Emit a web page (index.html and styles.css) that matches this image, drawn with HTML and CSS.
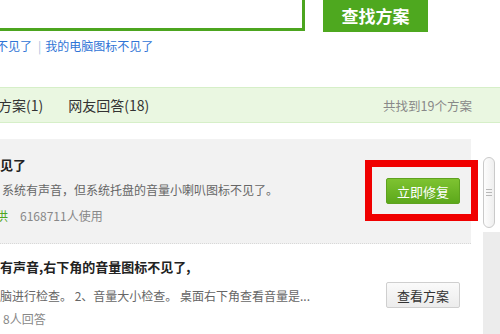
FILE: index.html
```html
<!DOCTYPE html>
<html lang="zh-CN">
<head>
<meta charset="utf-8">
<title>音量图标不见了</title>
<link rel="stylesheet" href="styles.css">
</head>
<body>
<div class="page">
  <div class="search">
    <div class="search-input"></div>
    <button class="search-btn">查找方案</button>
  </div>
  <div class="related"><a class="cut-link">不见了</a><span class="sep">|</span><a>我的电脑图标不见了</a></div>

  <div class="tabs">
    <div class="tab-list">
      <span class="tab tab-first">方案(1)</span>
      <span class="tab">网友回答(18)</span>
    </div>
    <span class="total">共找到19个方案</span>
  </div>

  <div class="results">
    <div class="item item-solution">
      <div class="info">
        <div class="title">见了</div>
        <div class="desc">系统有声音，但系统托盘的音量小喇叭图标不见了。</div>
        <div class="meta"><span class="src">供</span><span class="count">6168711人使用</span></div>
      </div>
      <button class="btn-fix">立即修复</button>
    </div>
    <div class="item item-answer">
      <div class="info">
        <div class="title">有声音,右下角的音量图标不见了,</div>
        <div class="desc">脑进行检查。 2、音量大小检查。 桌面右下角查看音量是...</div>
        <div class="meta"><span class="count">8人回答</span></div>
      </div>
      <button class="btn-view">查看方案</button>
    </div>
  </div>

  <div class="highlight"></div>
  <div class="scrollbar">
    <div class="thumb"><span class="grip"></span></div>
    <div class="track"></div>
  </div>
</div>
</body>
</html>
```

FILE: styles.css
```css
html, body {
  margin: 0;
  padding: 0;
  background: #fff;
}
body {
  width: 500px;
  height: 334px;
  overflow: hidden;
  font-family: "Noto Sans CJK SC", "Liberation Sans", sans-serif;
  color: #333;
}
.page {
  position: relative;
  width: 500px;
  height: 334px;
  overflow: hidden;
}
.search {
  display: flex;
  align-items: flex-start;
  margin-top: -5px;
}
.search-input {
  box-sizing: border-box;
  width: 400px;
  height: 36px;
  margin-left: -95px;
  border: 3px solid #4ca51f;
  background: #fff;
}
.search-btn {
  box-sizing: border-box;
  width: 105px;
  height: 37px;
  margin-left: 18px;
  border: 0;
  padding: 4px 0 0;
  background: #4ea81f;
  color: #fff;
  font-family: inherit;
  font-size: 17px;
  font-weight: bold;
}
.related {
  margin-top: 5px;
  height: 18px;
  line-height: 18px;
  font-size: 12px;
  color: #2f74d6;
  white-space: nowrap;
}
.related a {
  color: #2f74d6;
}
.cut-link {
  display: inline-block;
  margin-left: -4px;
}
.sep {
  color: #a9bfe0;
  margin: 0 4px 0 6px;
}
.tabs {
  box-sizing: border-box;
  margin-top: 32px;
  height: 36px;
  display: flex;
  align-items: center;
  justify-content: space-between;
  padding-right: 28px;
  background: #eaf7e1;
  border-top: 1px solid #d6efc8;
  border-bottom: 1px solid #d6efc8;
  white-space: nowrap;
}
.tab-list {
  display: flex;
  gap: 25px;
}
.tab {
  font-size: 14px;
  color: #333;
}
.tab-first {
  margin-left: -2px;
}
.total {
  font-size: 12.5px;
  color: #888;
}
.results {
  margin-top: 16px;
  width: 471px;
}
.item {
  display: flex;
  align-items: flex-start;
  padding-right: 11px;
  white-space: nowrap;
}
.item-solution {
  height: 105px;
  padding-top: 17px;
  box-sizing: border-box;
  background: #f2f2f2;
  border-bottom: 1px dotted #d8d8d8;
}
.item-answer {
  height: 102px;
  padding-top: 14px;
  box-sizing: border-box;
}
.info {
  flex: 1;
  min-width: 0;
  overflow: hidden;
}
.title {
  font-size: 13px;
  font-weight: bold;
  color: #222;
  line-height: 18px;
}
.desc {
  font-size: 12px;
  color: #666;
  line-height: 18px;
}
.meta {
  font-size: 12px;
  color: #888;
  line-height: 18px;
}
.item-solution .desc { margin-top: 7px; padding-left: 2px; }
.item-solution .meta { margin-top: 8px; }
.item-answer .desc { margin-top: 11px; }
.item-answer .meta { margin-top: 5px; padding-left: 3px; }
.src {
  display: inline-block;
  margin-left: -4px;
  color: #4ca51f;
  margin-right: 12px;
}
.btn-fix, .btn-view {
  box-sizing: border-box;
  width: 74px;
  height: 26px;
  padding: 0;
  border-radius: 2px;
  font-family: inherit;
  font-size: 13px;
  align-self: center;
}
.btn-fix {
  border: 1px solid #5ea21f;
  background: linear-gradient(#7ec331, #5ca81b);
  color: #fff;
  margin-top: -17px;
}
.btn-view {
  border: 1px solid #cfcfcf;
  background: linear-gradient(#fafafa, #ececec);
  color: #333;
  margin-top: -14px;
}
.highlight {
  position: absolute;
  left: 365px;
  top: 160px;
  width: 113px;
  height: 61px;
  box-sizing: border-box;
  border: 7px solid #f00000;
}
.scrollbar {
  position: absolute;
  left: 483px;
  top: 157px;
  width: 17px;
  bottom: 0;
}
.thumb {
  box-sizing: border-box;
  width: 12px;
  height: 71px;
  border: 1px solid #cacaca;
  border-radius: 6px;
  background: linear-gradient(90deg, #fdfdfd, #efefef);
  display: flex;
  align-items: center;
  justify-content: center;
}
.grip {
  width: 6px;
  height: 5px;
  border-top: 1px solid #b8b8b8;
  border-bottom: 1px solid #b8b8b8;
  position: relative;
}
.grip::after {
  content: "";
  position: absolute;
  left: 0;
  right: 0;
  top: 2px;
  border-top: 1px solid #b8b8b8;
}
.track {
  position: absolute;
  left: 0;
  right: 0;
  top: 75px;
  bottom: 0;
  background: #ececec;
}
```
